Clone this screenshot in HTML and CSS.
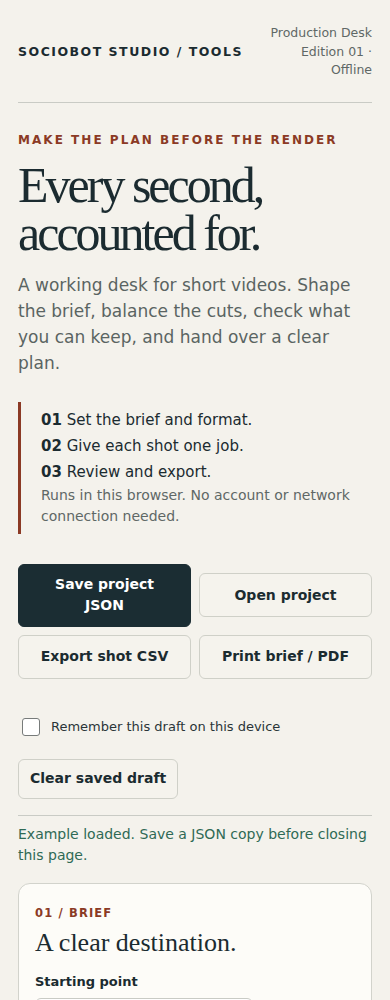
FILE: index.html
```html
<!DOCTYPE html>
<html lang="en">
<head>
<meta charset="utf-8">
<meta name="viewport" content="width=device-width, initial-scale=1">
<title>Sociobot Studio / Tools — Production Desk</title>
<link rel="stylesheet" href="styles.css">
</head>
<body>
<div class="page">
  <header class="masthead">
    <div class="brand">SOCIOBOT STUDIO / TOOLS</div>
    <div class="edition">Production Desk Edition 01 · Offline</div>
  </header>

  <section class="hero">
    <p class="eyebrow">MAKE THE PLAN BEFORE THE RENDER</p>
    <h1 class="headline">Every second, accounted for.</h1>
    <p class="lede">A working desk for short videos. Shape the brief, balance the cuts, check what you can keep, and hand over a clear plan.</p>

    <div class="steps">
      <p class="step"><b>01</b> Set the brief and format.</p>
      <p class="step"><b>02</b> Give each shot one job.</p>
      <p class="step"><b>03</b> Review and export.</p>
      <p class="note">Runs in this browser. No account or network connection needed.</p>
    </div>

    <div class="actions">
      <button class="btn btn-primary" type="button">Save project JSON</button>
      <button class="btn" type="button">Open project</button>
      <button class="btn" type="button">Export shot CSV</button>
      <button class="btn" type="button">Print brief / PDF</button>
    </div>

    <label class="remember">
      <input type="checkbox" class="check">
      <span>Remember this draft on this device</span>
    </label>

    <button class="btn btn-small" type="button">Clear saved draft</button>

    <p class="status">Example loaded. Save a JSON copy before closing this page.</p>
  </section>

  <section class="card">
    <p class="card-eyebrow">01 / BRIEF</p>
    <h2 class="card-title">A clear destination.</h2>
    <label class="field-label" for="start">Starting point</label>
    <select id="start" class="field-select">
      <option>Product launch teaser</option>
    </select>
  </section>
</div>
</body>
</html>
```

FILE: styles.css
```css
* {
  box-sizing: border-box;
}

html, body {
  margin: 0;
  padding: 0;
  background: #f4f2ec;
}

body {
  font-family: "DejaVu Sans", Verdana, sans-serif;
  color: #1b2b30;
}

.page {
  padding: 0 18px 40px;
}

.masthead {
  display: flex;
  justify-content: space-between;
  align-items: center;
  padding: 24px 0 22px;
  border-bottom: 1px solid #c9cbc5;
}

.brand {
  font-size: 12.5px;
  font-weight: bold;
  letter-spacing: 0.12em;
  line-height: 18px;
}

.edition {
  max-width: 112px;
  text-align: right;
  font-size: 12.5px;
  line-height: 18.5px;
  color: #5f6866;
}

.eyebrow {
  margin: 28px 0 0;
  font-size: 12px;
  line-height: 18px;
  font-weight: bold;
  letter-spacing: 0.17em;
  color: #8b3a25;
}

.headline {
  margin: 12px 0 0;
  font-family: "Liberation Serif", "Times New Roman", serif;
  font-weight: normal;
  font-size: 50px;
  line-height: 48px;
  letter-spacing: -0.06em;
  color: #1b2b30;
}

.lede {
  margin: 15px 0 0;
  font-size: 17px;
  line-height: 26px;
  color: #5a6462;
}

.steps {
  margin-top: 26px;
  border-left: 3px solid #8b3a25;
  padding: 5px 0 7px 20px;
}

.step {
  margin: 0;
  font-size: 15px;
  line-height: 26px;
  color: #1b2b30;
}

.step b {
  font-weight: bold;
}

.note {
  margin: 0;
  font-size: 14px;
  line-height: 21px;
  color: #5f6866;
}

.actions {
  margin-top: 30px;
  display: grid;
  grid-template-columns: 1fr 1fr;
  gap: 8px;
  align-items: center;
}

.btn {
  font-family: "DejaVu Sans", Verdana, sans-serif;
  font-size: 14px;
  font-weight: bold;
  line-height: 21px;
  color: #1b2b30;
  background: #f5f3ed;
  border: 1px solid #cfd0c8;
  border-radius: 6px;
  padding: 9.5px 16px;
  min-height: 44px;
  text-align: center;
}

.btn-primary {
  background: #1b2d33;
  border-color: #1b2d33;
  color: #ffffff;
}

.remember {
  display: flex;
  align-items: center;
  gap: 11px;
  margin-top: 38px;
  padding-left: 4px;
  font-size: 13px;
  line-height: 20px;
  color: #2a3538;
}

.check {
  appearance: none;
  -webkit-appearance: none;
  margin: 0;
  width: 18px;
  height: 18px;
  border: 1.5px solid #777b7a;
  border-radius: 3px;
  background: #ffffff;
}

.btn-small {
  display: block;
  margin-top: 22px;
  min-height: 40px;
  padding: 8.5px 11px;
}

.status {
  margin: 16px 0 0;
  padding-top: 8px;
  border-top: 1px solid #c9cbc5;
  font-size: 14px;
  line-height: 21px;
  color: #2f6a55;
}

.card {
  margin-top: 17px;
  background: #fdfcf8;
  border: 1px solid #d2d3cc;
  border-radius: 12px;
  padding: 20px 16px 24px;
}

.card-eyebrow {
  margin: 0;
  font-size: 11.5px;
  line-height: 18px;
  font-weight: bold;
  letter-spacing: 0.1em;
  color: #8b3a25;
}

.card-title {
  margin: 5px 0 0;
  font-family: "Liberation Serif", "Times New Roman", serif;
  font-weight: normal;
  font-size: 26px;
  line-height: 31px;
  color: #1b2b30;
}

.field-label {
  display: block;
  margin-top: 15px;
  font-size: 13px;
  line-height: 18px;
  font-weight: bold;
  color: #1b2b30;
}

.field-select {
  display: block;
  margin-top: 7px;
  width: 218px;
  height: 40px;
  font-family: "DejaVu Sans", Verdana, sans-serif;
  font-size: 14px;
  color: #1b2b30;
  background: #ffffff;
  border: 1px solid #c9cbc5;
  border-radius: 6px;
  padding: 0 10px;
}
```
